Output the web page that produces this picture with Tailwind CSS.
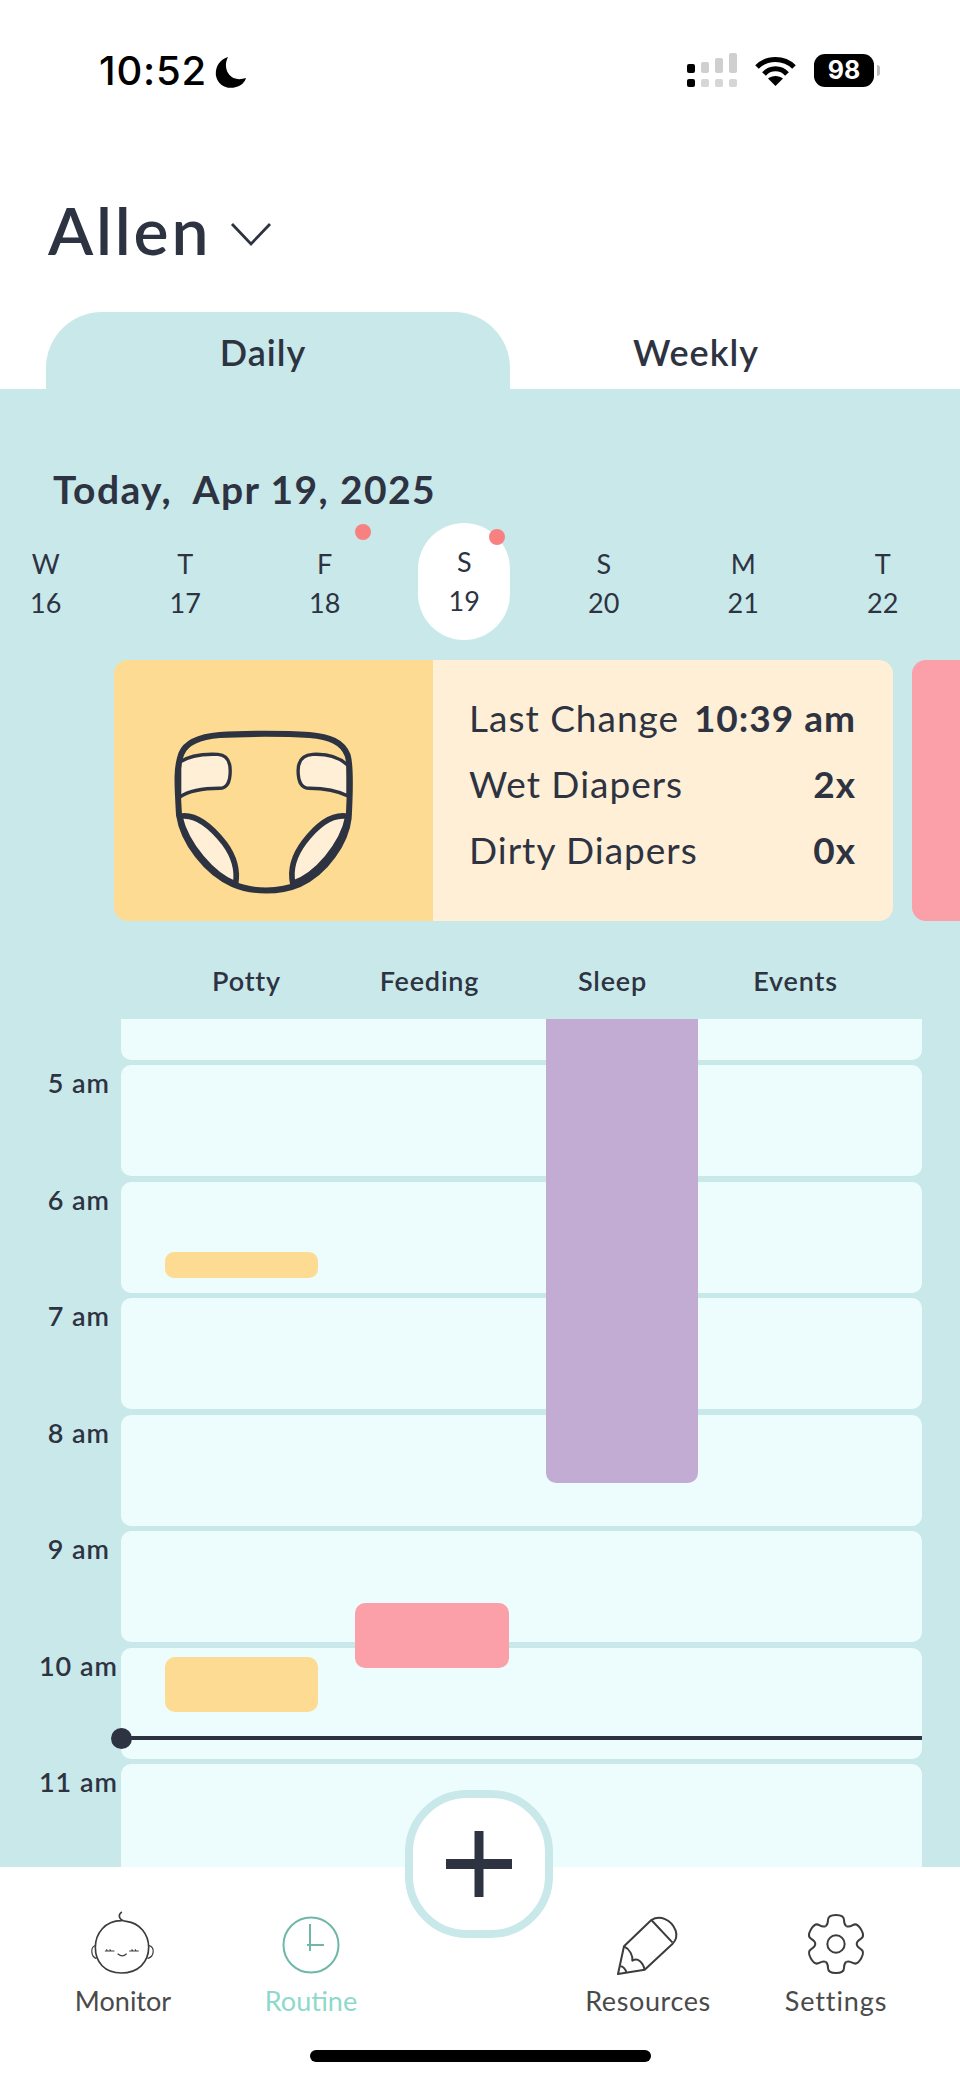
<!DOCTYPE html>
<html lang="en">
<head>
<meta charset="utf-8">
<title>Routine</title>
<script src="https://cdn.jsdelivr.net/npm/@tailwindcss/browser@4"></script>
</head>
<body class="m-0">
<div class="relative flex flex-col w-[960px] h-[2082px] overflow-hidden bg-white text-[#2e3342] font-['Lato','Noto_Sans',sans-serif]">

  <!-- status bar -->
  <div class="h-[120px] shrink-0 flex pl-[99px] pr-[80px] pt-[50px] items-start">
    <span class="font-['Inter',sans-serif] font-medium text-[40px] leading-[42px] text-black tracking-[0.8px]">10:52</span>
    <svg class="ml-[8px] mt-[6px]" width="32" height="33" viewBox="0 0 32 33"><path d="M13 1 C3 4 0 13 1 20 C3 29 12 34 21 31 C26 30 30 26 31 22 C22 25 15 22 12 15 C10 10 11 5 13 1Z" fill="#000"/></svg>
    <div class="ml-auto flex items-start">
      <div class="flex gap-[6px] h-[34px] mt-[3px]">
        <div class="w-[8px] flex flex-col justify-end gap-[6px]"><div class="h-[9px] rounded-[2px] bg-black"></div><div class="h-[8px] rounded-[2px] bg-black"></div></div>
        <div class="w-[8px] flex flex-col justify-end gap-[6px]"><div class="h-[11px] rounded-[2px] bg-[#cfcfcf]"></div><div class="h-[8px] rounded-[2px] bg-[#d6d6d6]"></div></div>
        <div class="w-[8px] flex flex-col justify-end gap-[6px]"><div class="h-[15px] rounded-[2px] bg-[#cfcfcf]"></div><div class="h-[8px] rounded-[2px] bg-[#d6d6d6]"></div></div>
        <div class="w-[8px] flex flex-col justify-end gap-[6px]"><div class="h-[20px] rounded-[2px] bg-[#cfcfcf]"></div><div class="h-[8px] rounded-[2px] bg-[#d6d6d6]"></div></div>
      </div>
      <svg class="ml-[18px] mt-[6px]" width="41" height="31" viewBox="0 0 41 31"><path d="M2 11 C12 1 29 1 39 11" fill="none" stroke="#000" stroke-width="5"/><path d="M9 18 C15 11 26 11 32 18" fill="none" stroke="#000" stroke-width="5"/><path d="M20.5 30 L13 22.500 C17 19 24 19 28 22.500Z" fill="#000"/></svg>
      <div class="ml-[18px] mt-[4px] w-[60px] h-[33px] rounded-[11px] bg-black flex items-center justify-center font-['Inter',sans-serif] font-bold text-[25px] leading-none text-white">98</div>
      <div class="ml-[3px] mt-[15px] w-[3px] h-[11px] rounded-r-[3px] bg-[#bdbdbd]"></div>
    </div>
  </div>

  <!-- child name -->
  <div class="h-[192px] shrink-0 flex items-start pl-[48px] pt-[71px]">
    <span class="text-[66px] leading-[78px] font-semibold tracking-[2.800px]">Allen</span>
    <svg class="ml-[18px] mt-[30px]" width="44" height="26" viewBox="0 0 44 26"><path d="M3 3 L22 23 L41 3" fill="none" stroke="#2e3342" stroke-width="2.800"/></svg>
  </div>

  <!-- tabs -->
  <div class="h-[77px] shrink-0 flex pl-[46px]">
    <div class="w-[464px] bg-[#c8e8ea] rounded-t-[56px] flex items-start justify-center pt-[17px] pr-[30px] text-[36px] leading-[46px] font-semibold tracking-[1px]">Daily</div>
    <div class="w-[372px] flex items-start justify-center pt-[17px] text-[36px] leading-[46px] font-semibold tracking-[1px]">Weekly</div>
  </div>

  <!-- main panel -->
  <main class="h-[1478px] shrink-0 bg-[#c8e8ea] overflow-hidden">
    <h1 class="ml-[53px] mt-[78px] mb-[12px] h-[44px] text-[39px] leading-[44px] font-bold whitespace-pre tracking-[1.400px]">Today,  Apr 19, 2025</h1>

    <div class="-ml-[24px] grid grid-cols-[repeat(7,139.500px)] h-[117px] text-[27px] leading-[39px] text-center">
      <div class="pt-[21px]"><div>W</div><div>16</div></div>
      <div class="pt-[21px]"><div>T</div><div>17</div></div>
      <div class="relative pt-[21px]"><div>F</div><div>18</div><span class="absolute left-[100px] top-[1px] w-[16px] h-[16px] rounded-full bg-[#f98080]"></span></div>
      <div class="relative flex justify-center">
        <div class="w-[92px] h-[117px] pt-[19px] rounded-[46px] bg-white"><div>S</div><div>19</div></div>
        <span class="absolute left-[94px] top-[6px] w-[16px] h-[16px] rounded-full bg-[#f98080]"></span>
      </div>
      <div class="pt-[21px]"><div>S</div><div>20</div></div>
      <div class="pt-[21px]"><div>M</div><div>21</div></div>
      <div class="pt-[21px]"><div>T</div><div>22</div></div>
    </div>

    <!-- summary cards -->
    <div class="mt-[20px] flex h-[261px] pl-[114px] gap-[19px]">
      <div class="w-[779px] shrink-0 flex rounded-[14px] overflow-hidden">
        <div class="w-[319px] bg-[#fddb92] pl-[59px] pt-[70px]">
          <svg width="183" height="166" viewBox="100 150 550 490" preserveAspectRatio="none">
            <path d="M120 245 C150 225 190 220 235 222 C260 224 272 240 272 270 C272 300 265 322 240 322 C190 322 150 328 120 348Z" fill="#feefd6" stroke="#2e3342" stroke-width="10"/>
            <path d="M626 255 C600 230 560 220 520 222 C490 224 476 240 476 270 C476 300 485 322 510 322 C560 322 600 332 626 345Z" fill="#feefd6" stroke="#2e3342" stroke-width="10"/>
            <path d="M120 405 C170 395 215 435 255 485 C285 525 295 565 288 605 C220 580 140 490 120 405Z" fill="#feefd6" stroke="#2e3342" stroke-width="17"/>
            <path d="M626 405 C575 395 530 435 495 480 C460 525 452 565 460 603 C530 580 610 490 626 405Z" fill="#feefd6" stroke="#2e3342" stroke-width="17"/>
            <path d="M118 400 C112 300 110 260 125 220 C140 185 180 170 240 165 C310 160 440 160 510 165 C570 170 610 185 625 225 C635 260 632 340 628 410 C620 480 560 570 480 605 C420 630 340 630 280 605 C200 570 130 480 118 400Z" fill="none" stroke="#2e3342" stroke-width="18"/>
          </svg>
        </div>
        <div class="flex-1 bg-[#feefd6] pl-[36px] pr-[37px] pt-[36px] flex flex-col gap-[22px] text-[37px] leading-[44px] tracking-[1px]">
          <div class="flex justify-between"><span>Last Change</span><span class="font-bold">10:39 am</span></div>
          <div class="flex justify-between"><span>Wet Diapers</span><span class="font-bold">2x</span></div>
          <div class="flex justify-between"><span>Dirty Diapers</span><span class="font-bold">0x</span></div>
        </div>
      </div>
      <div class="w-[300px] shrink-0 rounded-[14px] bg-[#fba0a8]"></div>
    </div>

    <!-- column headers -->
    <div class="pl-[155px] pt-[43px] h-[98px] grid grid-cols-[repeat(4,183px)] content-start text-center text-[27px] leading-[34px] font-semibold tracking-[0.8px]">
      <div>Potty</div><div>Feeding</div><div>Sleep</div><div>Events</div>
    </div>

    <!-- timeline -->
    <div class="relative h-[848px] overflow-hidden flex flex-col gap-[5.500px]">
      <div class="h-[40.500px] shrink-0 ml-[121px] mr-[38px] rounded-b-[10px] bg-[#edfdfd]"></div>
      <div class="h-[111px] shrink-0 flex"><div class="w-[110px] text-right text-[27px] leading-[34px] font-semibold tracking-[1px] pt-[1px]">5 am</div><div class="ml-[11px] mr-[38px] flex-1 rounded-[10px] bg-[#edfdfd]"></div></div>
      <div class="h-[111px] shrink-0 flex"><div class="w-[110px] text-right text-[27px] leading-[34px] font-semibold tracking-[1px] pt-[1px]">6 am</div><div class="ml-[11px] mr-[38px] flex-1 rounded-[10px] bg-[#edfdfd]"></div></div>
      <div class="h-[111px] shrink-0 flex"><div class="w-[110px] text-right text-[27px] leading-[34px] font-semibold tracking-[1px] pt-[1px]">7 am</div><div class="ml-[11px] mr-[38px] flex-1 rounded-[10px] bg-[#edfdfd]"></div></div>
      <div class="h-[111px] shrink-0 flex"><div class="w-[110px] text-right text-[27px] leading-[34px] font-semibold tracking-[1px] pt-[1px]">8 am</div><div class="ml-[11px] mr-[38px] flex-1 rounded-[10px] bg-[#edfdfd]"></div></div>
      <div class="h-[111px] shrink-0 flex"><div class="w-[110px] text-right text-[27px] leading-[34px] font-semibold tracking-[1px] pt-[1px]">9 am</div><div class="ml-[11px] mr-[38px] flex-1 rounded-[10px] bg-[#edfdfd]"></div></div>
      <div class="h-[111px] shrink-0 flex"><div class="w-[118px] text-right text-[27px] leading-[34px] font-semibold tracking-[1px] pt-[1px]">10 am</div><div class="ml-[3px] mr-[38px] flex-1 rounded-[10px] bg-[#edfdfd]"></div></div>
      <div class="h-[111px] shrink-0 flex"><div class="w-[118px] text-right text-[27px] leading-[34px] font-semibold tracking-[1px] pt-[1px]">11 am</div><div class="ml-[3px] mr-[38px] flex-1 rounded-[10px] bg-[#edfdfd]"></div></div>

      <!-- events drawn over the grid -->
      <div class="absolute left-[165px] top-[233px] w-[153px] h-[26px] rounded-[9px] bg-[#fddb92]"></div>
      <div class="absolute left-[546px] top-0 w-[152px] h-[464px] rounded-b-[10px] bg-[#c3acd4]"></div>
      <div class="absolute left-[355px] top-[584px] w-[154px] h-[65px] rounded-[10px] bg-[#fba0a8]"></div>
      <div class="absolute left-[165px] top-[638px] w-[153px] h-[55px] rounded-[10px] bg-[#fddb92]"></div>
      <div class="absolute left-[121px] top-[717px] w-[801px] h-[4px] bg-[#2e3342]"></div>
      <div class="absolute left-[111px] top-[709px] w-[21px] h-[21px] rounded-full bg-[#2e3342]"></div>
    </div>
  </main>

  <!-- bottom nav -->
  <nav class="flex-1 bg-white pl-[43px] pt-[42px] flex items-start text-[27px] leading-[36px] text-[#4a4a4a]">
    <div class="w-[160px] flex flex-col items-center">
      <svg class="h-[70px]" width="70" height="70" viewBox="90 60 210 210" fill="none" stroke="#3c3c3c" stroke-width="5" stroke-linecap="round">
        <path d="M190 70 C178 80 185 95 205 97 C245 102 272 135 272 175 C272 220 240 252 190 252 C140 252 112 220 112 175 C112 135 140 95 190 95"/>
        <path d="M110 170 C98 175 98 202 114 208 M274 170 C290 175 290 202 270 208" stroke-width="3.500"/>
        <path d="M142 186 L168 186 M215 186 L241 186 M146 182 L148 186 M156 182 L158 186 M222 182 L224 186 M232 182 L234 186" stroke-width="3.500"/>
        <path d="M180 195 C188 202 198 202 205 195" stroke-width="3.500"/>
      </svg>
      <span class="mt-[4px]">Monitor</span>
    </div>
    <div class="ml-[28px] w-[160px] flex flex-col items-center text-[#8fd8cc]">
      <svg class="h-[70px]" width="70" height="70" viewBox="0 0 70 70" fill="none" stroke="#6fb7a9" stroke-width="2"><circle cx="35" cy="36" r="27.500"/><path d="M34 15 L34 42 M31 36 L48 36"/></svg>
      <span class="mt-[4px]">Routine</span>
    </div>
    <div class="ml-[177px] w-[160px] flex flex-col items-center tracking-[0.6px]">
      <svg class="h-[70px]" width="70" height="70" viewBox="100 60 210 210" fill="none" stroke="#3c3c3c" stroke-width="6" stroke-linejoin="round">
        <path d="M133 172 L215 93 C240 78 275 90 288 125 C293 140 288 155 278 165 L195 242 L115 255Z"/>
        <path d="M215 93 L278 160"/>
        <path d="M133 172 C150 180 160 200 158 215 C175 205 190 220 195 242"/>
        <path d="M122 232 C130 232 138 240 140 250"/>
      </svg>
      <span class="mt-[4px]">Resources</span>
    </div>
    <div class="ml-[28px] w-[160px] flex flex-col items-center tracking-[0.9px]">
      <svg class="h-[70px]" width="70" height="70" viewBox="-105 -105 210 210" fill="none" stroke="#3c3c3c" stroke-width="6">
        <g id="gear">
          <path d="M-31 -53.700 C-26 -57 -24 -62 -24 -72 C-24 -82 -14 -87 0 -87 C14 -87 24 -82 24 -72 C24 -62 26 -57 31 -53.700"/>
          <path transform="rotate(60)" d="M-31 -53.700 C-26 -57 -24 -62 -24 -72 C-24 -82 -14 -87 0 -87 C14 -87 24 -82 24 -72 C24 -62 26 -57 31 -53.700"/>
          <path transform="rotate(120)" d="M-31 -53.700 C-26 -57 -24 -62 -24 -72 C-24 -82 -14 -87 0 -87 C14 -87 24 -82 24 -72 C24 -62 26 -57 31 -53.700"/>
          <path transform="rotate(180)" d="M-31 -53.700 C-26 -57 -24 -62 -24 -72 C-24 -82 -14 -87 0 -87 C14 -87 24 -82 24 -72 C24 -62 26 -57 31 -53.700"/>
          <path transform="rotate(240)" d="M-31 -53.700 C-26 -57 -24 -62 -24 -72 C-24 -82 -14 -87 0 -87 C14 -87 24 -82 24 -72 C24 -62 26 -57 31 -53.700"/>
          <path transform="rotate(300)" d="M-31 -53.700 C-26 -57 -24 -62 -24 -72 C-24 -82 -14 -87 0 -87 C14 -87 24 -82 24 -72 C24 -62 26 -57 31 -53.700"/>
        </g>
        <circle cx="0" cy="0" r="26"/>
      </svg>
      <span class="mt-[4px]">Settings</span>
    </div>
  </nav>

  <!-- floating add button -->
  <button class="absolute left-[405px] top-[1790px] w-[148px] h-[148px] rounded-[62px] border-[8px] border-[#c8e8ea] bg-white flex items-center justify-center">
    <svg width="66" height="66" viewBox="0 0 66 66"><path d="M28.500 0 H37.500 V28 H66 V38 H37.500 V66 H28.500 V38 H0 V28 H28.500Z" fill="#2e3342"/></svg>
  </button>

  <!-- home indicator -->
  <div class="absolute left-[310px] top-[2050px] w-[341px] h-[12px] rounded-full bg-black"></div>
</div>
</body>
</html>
